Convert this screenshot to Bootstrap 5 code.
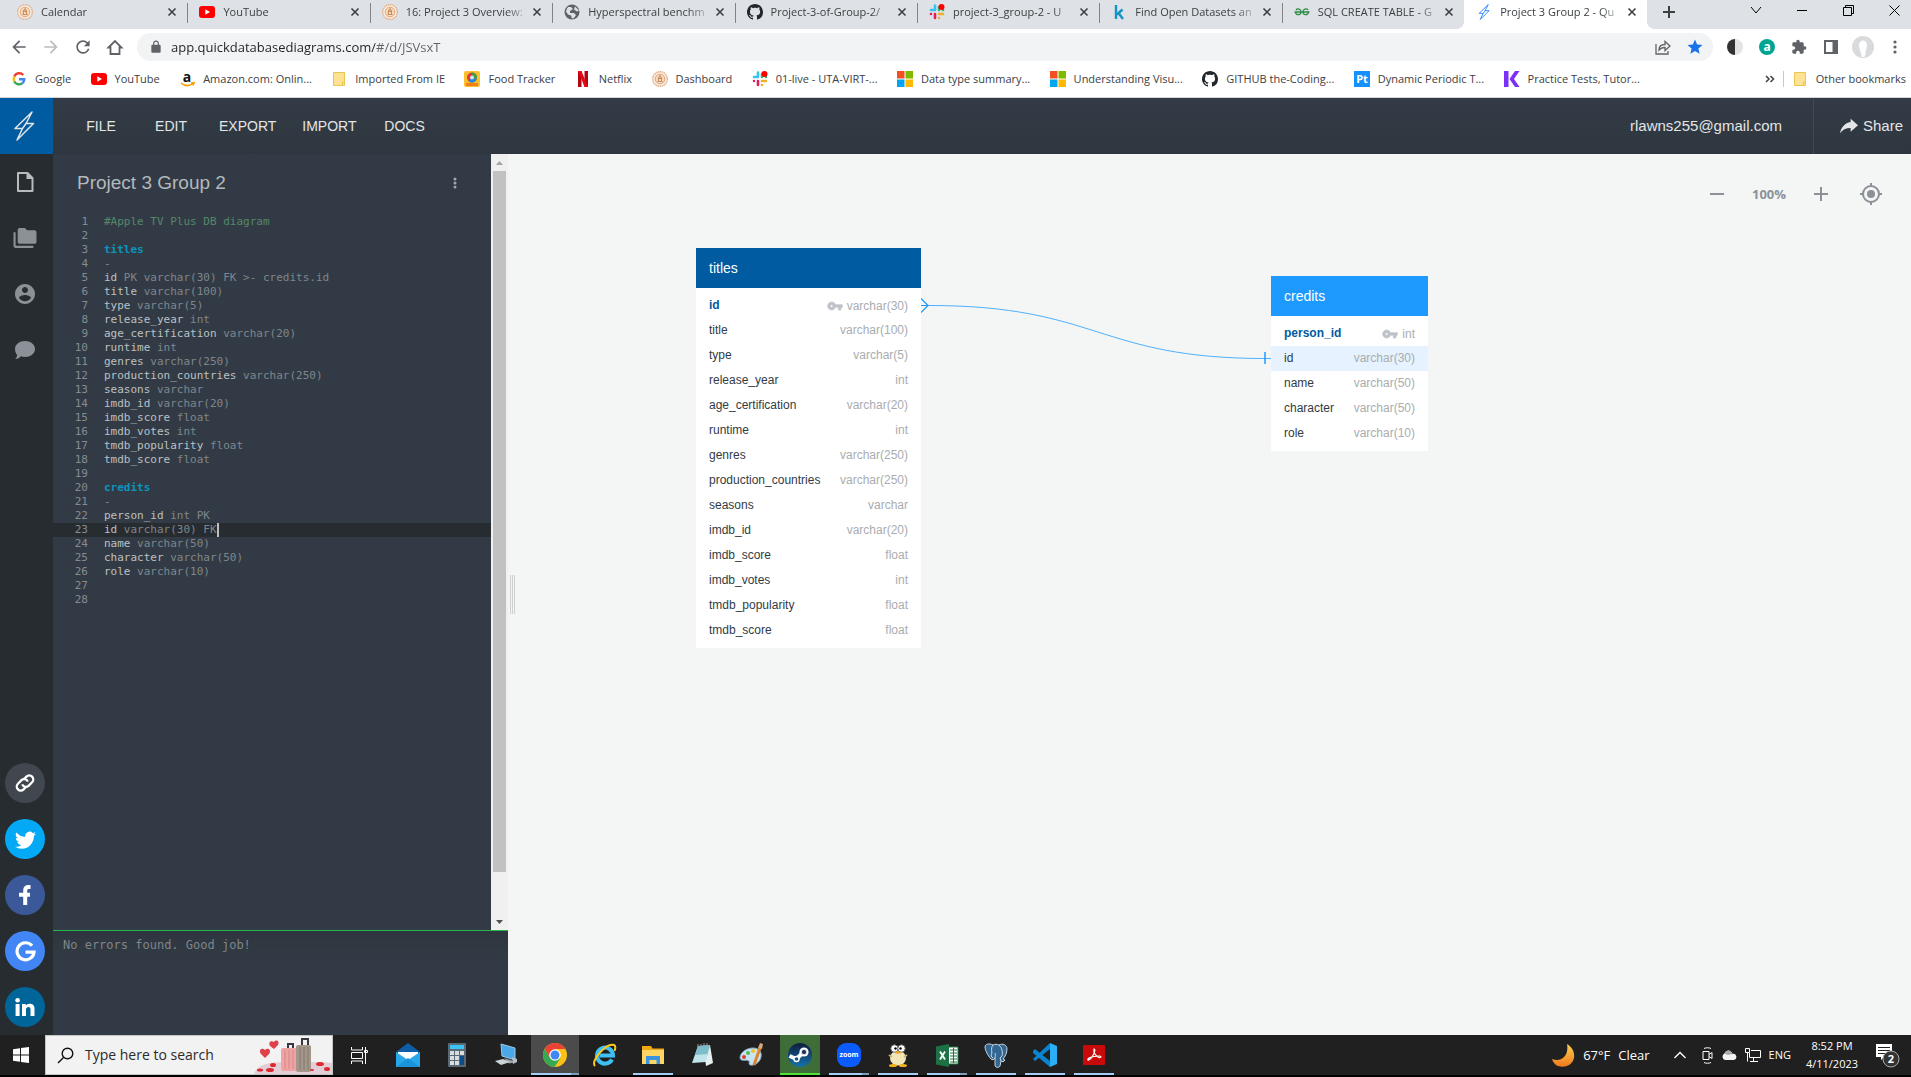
<!DOCTYPE html>
<html lang="en">
<head>
<meta charset="utf-8">
<meta name="viewport" content="width=device-width, initial-scale=1">
<title>Project 3 Group 2 - QuickDBD</title>
<link href="https://cdn.jsdelivr.net/npm/bootstrap@5.3.0/dist/css/bootstrap.min.css" rel="stylesheet">
<style>
  :root { --ui: "Open Sans", "Noto Sans", sans-serif; --app: "Liberation Sans", Arial, sans-serif; --code: "DejaVu Sans Mono", monospace; }
  body { font-family: var(--ui); font-size: 11px; line-height: 16px; color: #3c4043; overflow: hidden; }
  button { border: 0; background: none; padding: 0; color: inherit; display: flex; align-items: center; justify-content: center; }
  a { color: inherit; text-decoration: none; }
  svg { flex: none; display: block; }
  .tabstrip, .toolbar, .bookmarks, .apphead, .taskbar, .console { flex-shrink: 0; }

  /* browser tabs */
  .tabstrip { height: 29px; background: #dee1e6; padding-left: 5px; }
  .tab { flex: 0 1 9.57%; min-width: 0; height: 29px; padding: 0 10px 5px 12px; position: relative; }
  .tab + .tab::before { content: ""; position: absolute; left: 0; top: 3px; height: 20px; border-left: 1px solid #808387; }
  .tab.current { background: #fff; }
  .tab.current::before { display: none; }
  .tab.current::after, .stripend::before { content: ""; position: absolute; bottom: 0; width: 8px; height: 8px; }
  .tab.current::after { left: -8px; background: radial-gradient(circle at 0 0, #dee1e6 8px, #fff 8px); }
  .stripend { position: relative; flex: 1; padding-left: 12px; height: 29px; }
  .stripend::before { left: 0; background: radial-gradient(circle at 100% 0, #dee1e6 8px, #fff 8px); }
  .tabtitle { flex: 1; min-width: 0; white-space: nowrap; justify-content: flex-start; -webkit-mask-image: linear-gradient(90deg, #000 100px, transparent 124px); mask-image: linear-gradient(90deg, #000 100px, transparent 124px); }
  .plus { width: 20px; height: 24px; }
  .winbtn { width: 46px; height: 20px; color: #000; }
  .winbtn.quit { width: 34px; margin-left: 6px; }

  /* toolbar */
  .toolbar { height: 36px; padding: 0 0 0 3px; }
  .navbtn { width: 32px; height: 32px; color: #5f6368; }
  .omni { height: 28px; background: #f1f3f4; border-radius: 14px; margin: 0 6px; padding: 0 2px 0 12px; color: #5f6368; }
  .omni input { font-size: 13px; line-height: 20px; border: 0; outline: 0; background: linear-gradient(90deg, #202124 204px, #5f6368 204px); -webkit-background-clip: text; background-clip: text; -webkit-text-fill-color: transparent; color: #202124; padding: 0; min-width: 0; }
  .bookmarks { height: 33px; padding: 0 5px 4px 11px; border-bottom: 1px solid #d3d5d8; }
  .bmlist { flex: 0 1 1629px; }
  .vline { width: 1px; height: 16px; background: #c6c9cd; }

  /* app header */
  .apphead { height: 56px; background: linear-gradient(#333c46, #2e363f); color: #e3e5e7; font: 14px/20px var(--app); }
  .brand { width: 53px; background: #005ba1; padding-left: 13px; }
  .menu { margin-left: 13px; }
  .menu button { min-width: 70px; padding: 0 13px; }
  .account { font-size: 15px; }
  .share { border-left: 1px solid #414a54; padding: 0 8px 0 25px; margin-left: 31px; }

  /* left rail */
  .rail { width: 53px; background: #272c31; padding-bottom: 8px; }
  .rail .tool { width: 50px; height: 56px; color: #8c9197; }
  .rail .tool.on { color: #b8bbbe; }
  .social { width: 40px; height: 40px; border-radius: 50%; margin: 16px 0 0 5px; color: #fff; }
  .s-link { background: #40474e; }
  .s-tw { background: #03a9f4; }
  .s-fb { background: #3b5998; }
  .s-go { background: #4285f4; }
  .s-in { background: #006699; }

  /* editor */
  .side { width: 455px; background: #323b45; }
  .edhead { height: 61px; padding: 0 26px 3px 24px; }
  .edhead h1 { font: 19px/24px var(--app); color: #b4b8bc; margin: 0; }
  .code { font: 11px/14px var(--code); color: #7f868b; list-style: none; margin: 0; padding: 0; }
  .code li { height: 14px; display: flex; white-space: pre; }
  .code i { font-style: normal; width: 35px; text-align: right; margin-right: 16px; color: #858c92; }
  .code b { font-weight: 400; color: #bcc0c2; }
  .code .tb { font-weight: 700; color: #0d93bd; }
  .code .cm { color: #55876a; }
  .code .cur { background: #272c31; }
  .caret { border-right: 2px solid #bcc0c2; }
  .sbar { width: 17px; background: #f0f0f0; padding: 0 2px; }
  .sbar button { height: 17px; }
  .thumb { background: #c1c1c1; flex: 0 1 90.3%; }
  .console { height: 105px; border-top: 1px solid #25b84f; background: linear-gradient(#2e353e, #323b45 30px); font: 12px/16px var(--code); color: #7f868b; padding: 6px 10px; }

  /* diagram canvas */
  .board { background: #f4f6f5; font-family: var(--app); }
  .grip { position: absolute; left: 2px; top: 421px; width: 5px; height: 39px; border: 1px solid #cfcfcf; border-width: 0 1px; }
  .grip::after { content: ""; position: absolute; left: 1px; height: 39px; border-left: 1px solid #cfcfcf; }
  .zoomctl { position: absolute; right: 29px; top: 28px; color: #8b9197; font: 700 13px/24px var(--ui); }
  .entity { position: absolute; background: #fff; font-size: 12px; line-height: 15px; }
  .entity table { width: 100%; border-collapse: collapse; margin: 5px 0; }
  .entity h2 { font: 14px/40px var(--app); color: #fff; margin: 0; padding: 0 13px; }
  .entity td, .entity th { height: 25px; padding: 0; font-weight: 400; }
  .entity th { padding-left: 13px; color: #323b45; }
  .entity td { padding-right: 13px; color: #a9adb0; text-align: right; }
  .entity td svg { display: inline-block; vertical-align: -4px; margin-right: 4px; fill: #bfc3c9; stroke: #bfc3c9; }
  .entity .pk th { font-weight: 700; color: #005ba1; }
  .entity .hot { background: #e6f2ff; }
  .titles { left: 188px; top: 94px; width: 225px; }
  .titles h2 { background: #005ba1; }
  .credits { left: 763px; top: 122px; width: 157px; }
  .credits h2 { background: #1e9aff; }
  .links { position: absolute; left: 0; top: 0; }

  /* taskbar */
  .taskbar { height: 42px; background: #202020; border-bottom: 2px solid #000; color: #fff; }
  .start { width: 45px; padding-right: 3px; height: 40px; }
  .find { width: 288px; height: 40px; background: #f2f2f2; border: 1px solid #c4c4c4; padding-left: 11px; color: #222; margin-right: 2px; }
  .find input { font-size: 14px; line-height: 20px; border: 0; background: none; outline: 0; flex: 1; min-width: 0; padding: 0 0 0 11px; }
  .find input::placeholder { color: #2b2b2b; opacity: 1; }
  .tile { width: 40px; height: 40px; margin: 0 5px 0 4px; }
  .tile.run { border-bottom: 2px solid #a5cdf5; padding-top: 2px; }
  .tile.many { border-image: linear-gradient(90deg, #a5cdf5 80%, #7f9db8 80%) 2; }
  .tile.active { width: 48px; margin: 0 1px 0 0; background: #4b4b4b; }
  .tile.green { background: #3f6d38; border-color: #4fe237; }
  .weather { font-size: 13px; }
  .clock { font-size: 11px; line-height: 18px; text-align: center; width: 66px; }
  .notif { width: 46px; height: 40px; }
</style>
</head>
<body class="d-flex flex-column vh-100">

<svg width="0" height="0" class="position-absolute" aria-hidden="true">
  <symbol id="x" viewBox="0 0 10 10"><path d="M1.500 1.500l7 7M8.500 1.500l-7 7" stroke="#3c4043" stroke-width="1.600"/></symbol>
  <symbol id="seal" viewBox="0 0 16 16"><circle cx="8" cy="8" r="7.300" fill="#fbeee2" stroke="#e2b48e" stroke-width="1.400" stroke-dasharray="1.500 .5"/><circle cx="8" cy="8" r="4.800" fill="#f7dcc4" stroke="#dba67c"/><path d="M5.500 10.500h5M8 4.500L6 7.500h4zM6.500 7.500v3m3-3v3" stroke="#cb8a58" fill="#e9bd98"/></symbol>
  <symbol id="yt" viewBox="0 0 16 16"><rect y="2" width="16" height="12" rx="3" fill="#f00"/><path d="M6.300 5.300L11 8l-4.700 2.700z" fill="#fff"/></symbol>
  <symbol id="gh" viewBox="0 0 16 16"><path fill="#22272c" d="M8 0C3.580 0 0 3.580 0 8c0 3.540 2.290 6.530 5.470 7.590.4.070.55-.17.55-.38 0-.19-.01-.82-.01-1.490-2.010.37-2.530-.49-2.690-.94-.09-.23-.48-.94-.82-1.130-.28-.15-.68-.52-.01-.53.63-.01 1.080.58 1.230.82.72 1.210 1.870.87 2.330.66.07-.52.28-.87.51-1.070-1.780-.2-3.640-.89-3.640-3.950 0-.87.31-1.590.82-2.150-.08-.2-.36-1.020.08-2.120 0 0 .67-.21 2.200.82.64-.18 1.320-.27 2-.27.68 0 1.360.09 2 .27 1.530-1.040 2.200-.82 2.200-.82.44 1.100.16 1.920.08 2.120.51.56.82 1.270.82 2.150 0 3.070-1.870 3.750-3.650 3.950.29.25.54.73.54 1.480v2.200c0 .21.15.46.55.38A8.010 8.010 0 0 0 16 8c0-4.420-3.580-8-8-8z"/></symbol>
  <symbol id="slack" viewBox="0 0 16 16" stroke-width="2.600" stroke-linecap="round"><path d="M6 2v3.500M2 6h4M6 1.600h0" stroke="#36c5f0"/><path d="M10 3v3M14 6h0" stroke="#2eb67d"/><path d="M10 10h4M10 14h0" stroke="#ecb22e"/><path d="M6 10v4M2 10h0" stroke="#e01e5a"/><circle cx="12.500" cy="3" r="3" fill="#f00"/></symbol>
  <symbol id="bolt" viewBox="0 0 22 30"><path d="M19 1L2 17.500h7.500L4 29 20.500 12.500H13zM9.500 17.500L13 12.500" fill="none" stroke="currentColor" stroke-width="1.500" stroke-linejoin="round"/></symbol>
  <symbol id="folder" viewBox="0 0 16 16"><path d="M2.500 1.500h11v12h-2v1h-9z" fill="#fde293" stroke="#e9c64f"/><path d="M11.500 11v3.500h2V11z" fill="#fde293" stroke="#e9c64f"/></symbol>
  <symbol id="ms" viewBox="0 0 16 16"><path d="M0 0h7.500v7.500H0z" fill="#f25022"/><path d="M8.500 0H16v7.500H8.500z" fill="#7fba00"/><path d="M0 8.500h7.500V16H0z" fill="#00a4ef"/><path d="M8.500 8.500H16V16H8.500z" fill="#ffb900"/></symbol>
  <symbol id="key" viewBox="0 0 24 24"><path d="M12.650 10C11.830 7.670 9.610 6 7 6c-3.310 0-6 2.690-6 6s2.690 6 6 6c2.610 0 4.830-1.670 5.650-4H17v4h4v-4h2v-4H12.650zM7 14c-1.100 0-2-.9-2-2s.9-2 2-2 2 .9 2 2-.9 2-2 2z"/></symbol>
</svg>

<!-- Browser tabs -->
<div class="tabstrip d-flex" role="tablist">
  <div class="tab d-flex align-items-center gap-2"><svg width="16" height="16"><use href="#seal"/></svg><button class="tabtitle" role="tab">Calendar</button><button aria-label="Close"><svg width="10" height="10"><use href="#x"/></svg></button></div>
  <div class="tab d-flex align-items-center gap-2"><svg width="16" height="16"><use href="#yt"/></svg><button class="tabtitle" role="tab">YouTube</button><button aria-label="Close"><svg width="10" height="10"><use href="#x"/></svg></button></div>
  <div class="tab d-flex align-items-center gap-2"><svg width="16" height="16"><use href="#seal"/></svg><button class="tabtitle" role="tab">16: Project 3 Overview:</button><button aria-label="Close"><svg width="10" height="10"><use href="#x"/></svg></button></div>
  <div class="tab d-flex align-items-center gap-2"><svg width="16" height="16" viewBox="0 0 16 16"><circle cx="8" cy="8" r="7.500" fill="#5f6368"/><path d="M4 3l3 0 2 2-3 2v2h4l2 2-2 3-2 .5-1-3-3-1-2-3 1-3z" fill="#dee1e6"/><path d="M11 2.500l-1 3 3 2 2-1" fill="#dee1e6"/></svg><button class="tabtitle" role="tab">Hyperspectral benchm</button><button aria-label="Close"><svg width="10" height="10"><use href="#x"/></svg></button></div>
  <div class="tab d-flex align-items-center gap-2"><svg width="16" height="16"><use href="#gh"/></svg><button class="tabtitle" role="tab">Project-3-of-Group-2/</button><button aria-label="Close"><svg width="10" height="10"><use href="#x"/></svg></button></div>
  <div class="tab d-flex align-items-center gap-2"><svg width="16" height="16"><use href="#slack"/></svg><button class="tabtitle" role="tab">project-3_group-2 - U</button><button aria-label="Close"><svg width="10" height="10"><use href="#x"/></svg></button></div>
  <div class="tab d-flex align-items-center gap-2"><svg width="16" height="16" viewBox="0 0 16 16"><path d="M5 1v14M11.500 5.500L6 10.500m1.500-1.500l4.500 6" stroke="#1494c8" stroke-width="2.400" fill="none"/></svg><button class="tabtitle" role="tab">Find Open Datasets an</button><button aria-label="Close"><svg width="10" height="10"><use href="#x"/></svg></button></div>
  <div class="tab d-flex align-items-center gap-2"><svg width="16" height="16" viewBox="0 0 16 16" stroke="#2f8d46" stroke-width="1.300" fill="none"><path d="M2 6C3.500 4 7 5 7 8s-4.500 4-5.800 0H14.800C13.500 12 9 11 9 8s3.500-4 5-2"/></svg><button class="tabtitle" role="tab">SQL CREATE TABLE - G</button><button aria-label="Close"><svg width="10" height="10"><use href="#x"/></svg></button></div>
  <div class="tab current d-flex align-items-center gap-2"><svg width="16" height="16" class="text-primary"><use href="#bolt"/></svg><button class="tabtitle" role="tab" aria-selected="true">Project 3 Group 2 - Qu</button><button aria-label="Close"><svg width="10" height="10"><use href="#x"/></svg></button></div>
  <div class="stripend d-flex justify-content-between">
    <button class="plus" aria-label="New tab"><svg width="12" height="12" viewBox="0 0 12 12"><path d="M6 0v12M0 6h12" stroke="#3c4043" stroke-width="2"/></svg></button>
    <div class="d-flex">
      <button class="winbtn" aria-label="Search tabs"><svg width="12" height="12" viewBox="0 0 12 12"><path d="M1 3l5 6 5-6" fill="none" stroke="#000"/></svg></button>
      <button class="winbtn" aria-label="Minimize"><svg width="10" height="10" viewBox="0 0 10 10"><path d="M0 5.500h10" stroke="#000"/></svg></button>
      <button class="winbtn" aria-label="Restore"><svg width="11" height="11" viewBox="0 0 11 11"><path d="M.5 2.500h8v8h-8zM2.500 2.500v-2h8v8h-2" fill="none" stroke="#000"/></svg></button>
      <button class="winbtn quit" aria-label="Close window"><svg width="11" height="11" viewBox="0 0 11 11"><path d="M.5.5l10 10M10.500.5l-10 10" stroke="#000"/></svg></button>
    </div>
  </div>
</div>

<!-- Address bar -->
<div class="toolbar d-flex align-items-center bg-white">
  <button class="navbtn" aria-label="Back"><svg width="20" height="20" viewBox="0 0 24 24" fill="currentColor"><path d="M20 11H7.830l5.590-5.590L12 4l-8 8 8 8 1.410-1.410L7.830 13H20z"/></svg></button>
  <button class="navbtn" aria-label="Forward"><svg width="20" height="20" viewBox="0 0 24 24" fill="#babcbe"><path d="M4 11h12.170l-5.590-5.590L12 4l8 8-8 8-1.410-1.410L16.170 13H4z"/></svg></button>
  <button class="navbtn" aria-label="Reload"><svg width="20" height="20" viewBox="0 0 24 24" fill="currentColor"><path d="M17.650 6.350A7.960 7.960 0 0 0 12 4c-4.420 0-7.990 3.580-7.990 8s3.570 8 7.990 8c3.730 0 6.840-2.550 7.730-6h-2.080A5.990 5.990 0 0 1 12 18c-3.310 0-6-2.690-6-6s2.690-6 6-6c1.660 0 3.140.69 4.220 1.780L13 11h7V4z"/></svg></button>
  <button class="navbtn" aria-label="Home"><svg width="18" height="18" viewBox="0 0 18 18"><path d="M2.500 9.500L9 3l6.500 6.500h-2V16h-9V9.500z" fill="none" stroke="currentColor" stroke-width="1.800"/></svg></button>
  <div class="omni d-flex align-items-center flex-fill">
    <svg width="14" height="14" viewBox="0 0 24 24" fill="currentColor"><path d="M18 8h-1V6c0-2.760-2.240-5-5-5S7 3.240 7 6v2H6c-1.100 0-2 .9-2 2v10c0 1.100.9 2 2 2h12c1.100 0 2-.9 2-2V10c0-1.100-.9-2-2-2zM9 6a3 3 0 0 1 6 0v2H9z"/></svg>
    <input type="text" class="flex-fill ms-2" aria-label="Address" value="app.quickdatabasediagrams.com/#/d/JSVsxT">
    <button class="navbtn" aria-label="Share page"><svg width="16" height="16" viewBox="0 0 16 16" fill="none" stroke="currentColor" stroke-width="1.300"><path d="M1 5v10h12v-3M4 11c0-4 2.500-5.500 6-5.500V2.500l5 4.500-5 4.500V8.500C7.500 8.500 5.500 9 4 11z"/></svg></button>
    <button class="navbtn" aria-label="Bookmark"><svg width="18" height="18" viewBox="0 0 24 24" fill="#1a73e8"><path d="M12 17.270L18.180 21l-1.640-7.030L22 9.240l-7.190-.61L12 2 9.190 8.630 2 9.240l5.460 4.730L5.820 21z"/></svg></button>
  </div>
  <button class="navbtn" aria-label="Dark mode"><svg width="16" height="16" viewBox="0 0 16 16"><path d="M8 0a8 8 0 0 0 0 16z" fill="#333"/><path d="M8 0a8 8 0 0 1 0 16z" fill="#e4e4e4"/></svg></button>
  <button class="navbtn" aria-label="Extension a"><svg width="16" height="16" viewBox="0 0 16 16"><circle cx="8" cy="8" r="8" fill="#00a591"/><text x="8" y="12" font-size="12" font-weight="700" fill="#fff" text-anchor="middle">a</text></svg></button>
  <button class="navbtn" aria-label="Extensions"><svg width="16" height="16" viewBox="0 0 24 24" fill="currentColor"><path d="M20.500 11H19V7c0-1.100-.9-2-2-2h-4V3.500C13 2.120 11.880 1 10.500 1S8 2.120 8 3.500V5H4c-1.100 0-1.990.9-1.990 2v3.800H3.500c1.490 0 2.700 1.210 2.700 2.700s-1.210 2.700-2.700 2.700H2V20c0 1.100.9 2 2 2h3.800v-1.500c0-1.490 1.210-2.700 2.700-2.700 1.490 0 2.700 1.210 2.700 2.700V22H17c1.100 0 2-.9 2-2v-4h1.500c1.380 0 2.500-1.120 2.500-2.500S21.880 11 20.500 11z"/></svg></button>
  <button class="navbtn" aria-label="Side panel"><svg width="14" height="14" viewBox="0 0 14 14"><path d="M1 1h12v12H1z" fill="none" stroke="currentColor" stroke-width="2"/><path d="M8.500 1H13v12H8.500z" fill="currentColor"/></svg></button>
  <button class="navbtn" aria-label="Profile"><svg width="22" height="22" viewBox="0 0 22 22"><circle cx="11" cy="11" r="11" fill="#d9dadb"/><path d="M7 9c0-6 8-6 8 0 0 4-2 6-1.500 9.500L12 21H9.500C10 17 7 14 7 9z" fill="#fff"/></svg></button>
  <button class="navbtn" aria-label="Menu"><svg width="4" height="14" viewBox="0 0 4 14" fill="currentColor"><circle cx="2" cy="2" r="1.600"/><circle cx="2" cy="7" r="1.600"/><circle cx="2" cy="12" r="1.600"/></svg></button>
</div>

<!-- Bookmarks -->
<nav class="bookmarks d-flex align-items-center bg-white text-nowrap" aria-label="Bookmarks">
  <div class="bmlist d-flex justify-content-between">
    <a href="#" class="d-flex gap-2"><svg width="16" height="16" viewBox="0 0 16 16" fill="none" stroke-width="2.400"><path d="M12.300 4A5.400 5.400 0 0 0 3.300 5.500" stroke="#ea4335"/><path d="M3.300 5.500a5.400 5.400 0 0 0 0 5" stroke="#fbbc05"/><path d="M3.300 10.500a5.400 5.400 0 0 0 8 1.800" stroke="#34a853"/><path d="M11.300 12.300A5.200 5.200 0 0 0 13.300 8.300H8" stroke="#4285f4"/></svg>Google</a>
    <a href="#" class="d-flex gap-2"><svg width="16" height="16"><use href="#yt"/></svg>YouTube</a>
    <a href="#" class="d-flex gap-2"><svg width="16" height="16" viewBox="0 0 16 16"><text x="8" y="11" font-size="14" font-weight="700" fill="#111" text-anchor="middle">a</text><path d="M2 12c4 3.500 8.500 3 12 .5M12 12l3-.3-1 2.800" stroke="#f90" stroke-width="1.500" fill="none"/></svg>Amazon.com: Onlin...</a>
    <a href="#" class="d-flex gap-2"><svg width="16" height="16"><use href="#folder"/></svg>Imported From IE</a>
    <a href="#" class="d-flex gap-2"><svg width="16" height="16" viewBox="0 0 16 16"><rect width="16" height="16" rx="2" fill="#fbc02d"/><rect x="2" y="12" width="12" height="3" fill="#f57f17"/><circle cx="8" cy="6.500" r="5" fill="#e53935"/><path d="M8 6.500V1.500a5 5 0 0 1 4.500 7.200z" fill="#43a047"/><path d="M8 6.500l4.500 2.300a5 5 0 0 1-8 1.200z" fill="#1e88e5"/><circle cx="8" cy="6.500" r="2" fill="#cfe2ff"/></svg>Food Tracker</a>
    <a href="#" class="d-flex gap-2"><svg width="16" height="16" viewBox="0 0 16 16"><path d="M3 0h3.500v16H3zM9.500 0H13v16H9.500z" fill="#b1060f"/><path d="M3 0h3.500L13 16H9.500z" fill="#e50914"/></svg>Netflix</a>
    <a href="#" class="d-flex gap-2"><svg width="16" height="16"><use href="#seal"/></svg>Dashboard</a>
    <a href="#" class="d-flex gap-2"><svg width="16" height="16"><use href="#slack"/></svg>01-live - UTA-VIRT-...</a>
    <a href="#" class="d-flex gap-2"><svg width="16" height="16"><use href="#ms"/></svg>Data type summary...</a>
    <a href="#" class="d-flex gap-2"><svg width="16" height="16"><use href="#ms"/></svg>Understanding Visu...</a>
    <a href="#" class="d-flex gap-2"><svg width="16" height="16"><use href="#gh"/></svg>GITHUB the-Coding...</a>
    <a href="#" class="d-flex gap-2"><svg width="16" height="16" viewBox="0 0 16 16"><rect width="16" height="16" fill="#1590ff"/><text x="8" y="12" font-size="11" font-weight="700" fill="#fff" text-anchor="middle">Pt</text></svg>Dynamic Periodic T...</a>
    <a href="#" class="d-flex gap-2"><svg width="16" height="16" viewBox="0 0 16 16" fill="#7b2ff7"><path d="M0 0h4.500v16H0zM11 0h4.500L10 8l5.500 8H11L5.500 8z"/></svg>Practice Tests, Tutor...</a>
  </div>
  <div class="d-flex align-items-center ms-auto">
    <button aria-label="More bookmarks" class="me-2"><svg width="10" height="8" viewBox="0 0 10 8"><path d="M1 1l3 3-3 3M5.500 1l3 3-3 3" fill="none" stroke="#3c4043" stroke-width="1.500"/></svg></button>
    <span class="vline me-2"></span>
    <a href="#" class="d-flex gap-2"><svg width="16" height="16"><use href="#folder"/></svg>Other bookmarks</a>
  </div>
</nav>

<!-- App header -->
<header class="apphead d-flex">
  <a href="#" class="brand d-flex align-items-center" aria-label="QuickDBD"><svg width="22" height="30"><use href="#bolt"/></svg></a>
  <nav class="menu d-flex"><button>FILE</button><button>EDIT</button><button>EXPORT</button><button>IMPORT</button><button>DOCS</button></nav>
  <button class="account ms-auto">rlawns255@gmail.com</button>
  <button class="share account"><svg width="20" height="18" class="me-1" viewBox="0 0 24 22" fill="currentColor"><path d="M14 6V2l9 8-9 8v-4.500C8 13.500 4 15.500 1 20 2 13 7 7 14 6z"/></svg>Share</button>
</header>

<main class="d-flex flex-fill overflow-hidden">
  <!-- Left rail -->
  <aside class="rail d-flex flex-column">
    <button class="tool on" aria-label="Diagram"><svg width="24" height="24" viewBox="0 0 24 24"><path d="M5 3h9.500L19.500 8v13H5z" fill="none" stroke="currentColor" stroke-width="2" stroke-linejoin="round"/><path d="M13.500 2.500v6.500h6.500z" fill="currentColor"/></svg></button>
    <button class="tool" aria-label="My diagrams"><svg width="26" height="24" viewBox="0 0 24 23" fill="currentColor"><path d="M3 6H1v13c0 1.100.9 2 2 2h17v-2H3z"/><path d="M21 4h-7l-2-2H7c-1.100 0-2 .9-2 2v11c0 1.100.9 2 2 2h14c1.100 0 2-.9 2-2V6c0-1.100-.9-2-2-2z"/></svg></button>
    <button class="tool" aria-label="Account"><svg width="24" height="24" viewBox="0 0 24 24" fill="currentColor"><path d="M12 2C6.480 2 2 6.480 2 12s4.480 10 10 10 10-4.480 10-10S17.520 2 12 2zm0 3c1.660 0 3 1.340 3 3s-1.340 3-3 3-3-1.340-3-3 1.340-3 3-3zm0 14.200c-2.500 0-4.710-1.280-6-3.220.03-1.990 4-3.080 6-3.080 1.990 0 5.970 1.090 6 3.080-1.290 1.940-3.500 3.220-6 3.220z"/></svg></button>
    <button class="tool" aria-label="Feedback"><svg width="22" height="20" viewBox="0 0 22 20" fill="currentColor"><path d="M11 1c5.500 0 10 3.500 10 8s-4.500 8-10 8c-1.500 0-3-.3-4.200-.8C5.500 18 3.500 19 1.200 19c1-1 1.800-2.500 2-4C1.800 13.500 1 11.300 1 9c0-4.500 4.500-8 10-8z"/></svg></button>
    <a href="#" class="social s-link d-flex align-items-center justify-content-center mt-auto" aria-label="Copy link"><svg width="22" height="22" viewBox="0 0 22 22" fill="none" stroke="currentColor" stroke-width="2.300"><g transform="rotate(-45 11 11)"><path d="M9.500 14.500H5.500a4 4 0 0 1 0-8h5a4 4 0 0 1 3.500 5.500"/><path d="M12.500 7.500h4a4 4 0 0 1 0 8h-5a4 4 0 0 1-3.500-5.500"/></g></svg></a>
    <a href="#" class="social s-tw d-flex align-items-center justify-content-center" aria-label="Twitter"><svg width="21" height="21" viewBox="0 0 16 16" fill="currentColor"><path d="M5.026 15c6.038 0 9.341-5.003 9.341-9.334 0-.14 0-.282-.006-.422A6.685 6.685 0 0 0 16 3.542a6.658 6.658 0 0 1-1.889.518 3.301 3.301 0 0 0 1.447-1.817 6.533 6.533 0 0 1-2.087.793A3.286 3.286 0 0 0 7.875 6.030a9.325 9.325 0 0 1-6.767-3.429 3.289 3.289 0 0 0 1.018 4.382A3.323 3.323 0 0 1 .64 6.575v.045a3.288 3.288 0 0 0 2.632 3.218 3.203 3.203 0 0 1-.865.115 3.230 3.230 0 0 1-.614-.057 3.283 3.283 0 0 0 3.067 2.277A6.588 6.588 0 0 1 .78 13.580a6.320 6.320 0 0 1-.78-.045A9.344 9.344 0 0 0 5.026 15z"/></svg></a>
    <a href="#" class="social s-fb d-flex align-items-center justify-content-center" aria-label="Facebook"><svg width="12" height="20" viewBox="0 0 12 20"><path d="M11.500 2H9.500C7 2 6.200 3.500 6.200 5.500V20M0 9.800h11" fill="none" stroke="#fff" stroke-width="4"/></svg></a>
    <a href="#" class="social s-go d-flex align-items-center justify-content-center" aria-label="Google"><svg width="21" height="21" viewBox="0 0 21 21"><path d="M17 4.700A8.500 8.500 0 1 0 19 11.200H10.500" fill="none" stroke="#fff" stroke-width="3.200"/></svg></a>
    <a href="#" class="social s-in d-flex align-items-center justify-content-center" aria-label="LinkedIn"><svg width="20" height="18" viewBox="0 0 20 18" fill="#fff"><circle cx="2.600" cy="2.300" r="2.300"/><path d="M.6 6h4v12h-4zM7 6h3.800v1.700C12 5 19.500 4.500 19.500 10.500V18h-4v-6.500c0-3.500-4.500-3-4.500 0V18H7z"/></svg></a>
  </aside>

  <!-- Editor -->
  <section class="side d-flex flex-column">
    <div class="d-flex flex-fill overflow-hidden">
      <div class="flex-fill">
        <div class="edhead d-flex align-items-center justify-content-between">
          <h1>Project 3 Group 2</h1>
          <button aria-label="Diagram menu" class="me-2"><svg width="4" height="12" viewBox="0 0 4 12" fill="#a0a5aa"><circle cx="2" cy="2" r="1.500"/><circle cx="2" cy="6" r="1.500"/><circle cx="2" cy="10" r="1.500"/></svg></button>
        </div>
        <ul class="code">
          <li><i>1</i><span class="cm">#Apple TV Plus DB diagram</span></li>
          <li><i>2</i></li>
          <li><i>3</i><span class="tb">titles</span></li>
          <li><i>4</i>-</li>
          <li><i>5</i><b>id</b> PK varchar(30) FK &gt;- credits.id</li>
          <li><i>6</i><b>title</b> varchar(100)</li>
          <li><i>7</i><b>type</b> varchar(5)</li>
          <li><i>8</i><b>release_year</b> int</li>
          <li><i>9</i><b>age_certification</b> varchar(20)</li>
          <li><i>10</i><b>runtime</b> int</li>
          <li><i>11</i><b>genres</b> varchar(250)</li>
          <li><i>12</i><b>production_countries</b> varchar(250)</li>
          <li><i>13</i><b>seasons</b> varchar</li>
          <li><i>14</i><b>imdb_id</b> varchar(20)</li>
          <li><i>15</i><b>imdb_score</b> float</li>
          <li><i>16</i><b>imdb_votes</b> int</li>
          <li><i>17</i><b>tmdb_popularity</b> float</li>
          <li><i>18</i><b>tmdb_score</b> float</li>
          <li><i>19</i></li>
          <li><i>20</i><span class="tb">credits</span></li>
          <li><i>21</i>-</li>
          <li><i>22</i><b>person_id</b> int PK</li>
          <li class="cur"><i>23</i><b>id</b> varchar(30) FK<span class="caret"></span></li>
          <li><i>24</i><b>name</b> varchar(50)</li>
          <li><i>25</i><b>character</b> varchar(50)</li>
          <li><i>26</i><b>role</b> varchar(10)</li>
          <li><i>27</i></li>
          <li><i>28</i></li>
        </ul>
      </div>
      <div class="sbar d-flex flex-column">
        <button aria-label="Scroll up"><svg width="7" height="4" viewBox="0 0 7 4"><path d="M0 4L3.500 0 7 4z" fill="#a3a3a3"/></svg></button>
        <div class="thumb"></div>
        <button class="mt-auto" aria-label="Scroll down"><svg width="7" height="4" viewBox="0 0 7 4"><path d="M0 0l3.500 4L7 0z" fill="#505050"/></svg></button>
      </div>
    </div>
    <div class="console">No errors found. Good job!</div>
  </section>

  <!-- Diagram canvas -->
  <section class="board flex-fill position-relative">
    <div class="grip"></div>
    <div class="zoomctl d-flex align-items-center">
      <button aria-label="Zoom out"><svg width="14" height="14" viewBox="0 0 14 14"><path d="M0 7h14" stroke="currentColor" stroke-width="2"/></svg></button>
      <span class="mx-4 px-1">100%</span>
      <button aria-label="Zoom in" class="me-4"><svg width="14" height="14" viewBox="0 0 14 14"><path d="M0 7h14M7 0v14" stroke="currentColor" stroke-width="2"/></svg></button>
      <button aria-label="Center diagram" class="ms-2"><svg width="22" height="22" viewBox="0 0 22 22"><circle cx="11" cy="11" r="8" fill="none" stroke="currentColor" stroke-width="2"/><circle cx="11" cy="11" r="4" fill="currentColor"/><path d="M11 0v4M11 18v4M0 11h4M18 11h4" stroke="currentColor" stroke-width="2"/></svg></button>
    </div>
    <svg class="links" width="780" height="300" viewBox="0 0 780 300" fill="none" stroke="#1e9aff">
      <path d="M421 151.500C590 151.500 590 204.500 757 204.500H763" stroke="#4fb0ff"/>
      <path d="M413 144.500l7 7-7 7M413 151.500h8" stroke-width="1.200"/>
      <path d="M757 198v12" stroke-width="1.500"/>
    </svg>
    <article class="entity titles">
      <h2>titles</h2>
      <table>
        <tr class="pk"><th>id</th><td><svg width="16" height="16"><use href="#key"/></svg>varchar(30)</td></tr>
        <tr><th>title</th><td>varchar(100)</td></tr>
        <tr><th>type</th><td>varchar(5)</td></tr>
        <tr><th>release_year</th><td>int</td></tr>
        <tr><th>age_certification</th><td>varchar(20)</td></tr>
        <tr><th>runtime</th><td>int</td></tr>
        <tr><th>genres</th><td>varchar(250)</td></tr>
        <tr><th>production_countries</th><td>varchar(250)</td></tr>
        <tr><th>seasons</th><td>varchar</td></tr>
        <tr><th>imdb_id</th><td>varchar(20)</td></tr>
        <tr><th>imdb_score</th><td>float</td></tr>
        <tr><th>imdb_votes</th><td>int</td></tr>
        <tr><th>tmdb_popularity</th><td>float</td></tr>
        <tr><th>tmdb_score</th><td>float</td></tr>
      </table>
    </article>
    <article class="entity credits">
      <h2>credits</h2>
      <table>
        <tr class="pk"><th>person_id</th><td><svg width="16" height="16"><use href="#key"/></svg>int</td></tr>
        <tr class="hot"><th>id</th><td>varchar(30)</td></tr>
        <tr><th>name</th><td>varchar(50)</td></tr>
        <tr><th>character</th><td>varchar(50)</td></tr>
        <tr><th>role</th><td>varchar(10)</td></tr>
      </table>
    </article>
  </section>
</main>

<!-- Taskbar -->
<footer class="taskbar d-flex">
  <button class="start" aria-label="Start"><svg width="16" height="16" viewBox="0 0 16 16" fill="#fff"><path d="M0 2.200l7-1v6.300H0zM8 1.100L16 0v7.500H8zM0 8.500h7v6.300l-7-1zM8 8.500h8V16l-8-1.100z"/></svg></button>
  <label class="find d-flex align-items-center">
    <svg width="17" height="17" viewBox="0 0 17 17" fill="none" stroke="#111" stroke-width="1.400"><circle cx="10.500" cy="6.500" r="5.300"/><path d="M6.500 10.500L1 16"/></svg>
    <input type="text" placeholder="Type here to search" aria-label="Type here to search">
    <svg width="78" height="38" viewBox="0 0 78 38"><path d="M0 38C4 26 20 26 40 26s30 0 38 1v11z" fill="#e3cdd6"/><path d="M11 22L7 18c-3-4 1-7 4-4 3-3 7 0 4 4zM20 13l-4-3c-2-4 1-6 4-4 2-3 6-1 4 3z" fill="#e0404a"/><path d="M34 13V8h5v5M48 9V3h6v6" stroke="#3b3640" stroke-width="2" fill="none"/><rect x="27" y="12" width="16" height="23" rx="2" fill="#f0a3a3"/><path d="M31 14v19M35 14v19M39 14v19" stroke="#d48787"/><rect x="42" y="9" width="15" height="27" rx="2" fill="#a2978a"/><path d="M46 11v23M50 11v23M54 11v23" stroke="#83796d"/><g fill="#dc2b30"><ellipse cx="19" cy="29" rx="3" ry="2"/><ellipse cx="6" cy="34" rx="3" ry="1.500"/><ellipse cx="16" cy="34" rx="4" ry="2"/><ellipse cx="66" cy="28" rx="4" ry="2"/><ellipse cx="73" cy="33" rx="3" ry="2"/><ellipse cx="58" cy="34" rx="2" ry="1"/></g></svg>
  </label>
  <button class="tile" aria-label="Task view"><svg width="17" height="17" viewBox="0 0 17 17" fill="none" stroke="#fff"><path d="M.5 0v3h11V0M.5 17v-3h11v3M.5 5.500h11v6H.5zM14.500 0v17M13.500 3.500h3v2h-3z"/></svg></button>
  <button class="tile" aria-label="Mail"><svg width="24" height="24" viewBox="0 0 24 24"><path d="M0 9L12 0l12 9v14H0z" fill="#0f5fa8"/><path d="M2 9h20v6l-10 5L2 15z" fill="#fff"/><path d="M0 9l12 8L24 9v15H0z" fill="#28a8ea"/><path d="M0 24L12 15l12 9z" fill="#1b93dc"/></svg></button>
  <button class="tile" aria-label="Calculator"><svg width="18" height="24" viewBox="0 0 18 24"><rect width="18" height="24" rx="1" fill="#5a6a75"/><path d="M2 2h14v4H2z" fill="#3bc3f3"/><g fill="#d8dde0"><path d="M2 8h4v4H2zM7 8h4v4H7zM12 8h4v4h-4zM2 13h4v4H2zM7 13h4v4H7zM2 18h4v4H2zM7 18h4v4H7z"/></g><path d="M12 13h4v9h-4z" fill="#0c4c8a"/></svg></button>
  <button class="tile" aria-label="Remote desktop"><svg width="24" height="24" viewBox="0 0 24 24"><path d="M7 1l14 4v12L8 13z" fill="#4aa8e8" stroke="#9fc8e4"/><path d="M10 15l8 2.500 2 2-5 1z" fill="#9aa4ab"/><path d="M1 18l8-2 7 3-9 3z" fill="#cdd4d9"/><path d="M18 14l5 2v3l-4 2z" fill="#b5bec5"/></svg></button>
  <button class="tile run many active" aria-label="Chrome"><svg width="24" height="24" viewBox="0 0 24 24"><circle cx="12" cy="12" r="12" fill="#fbc116"/><path d="M1.600 6A12 12 0 0 1 22.400 6H12L7 15z" fill="#ea4335"/><path d="M1.600 6A12 12 0 0 0 11.500 24l6-9H7z" fill="#34a853"/><circle cx="12" cy="12" r="5.800" fill="#fff"/><circle cx="12" cy="12" r="4.500" fill="#4285f4"/></svg></button>
  <button class="tile" aria-label="Internet Explorer"><svg width="25" height="25" viewBox="0 0 25 25" fill="none"><path d="M20 16.500A8 8 0 1 1 21 12.500H7.500" stroke="#3fc0f5" stroke-width="4"/><path d="M3 23C-2 18 14 0 22 2c2 1 1.500 3.500.5 6" stroke="#fcc81e" stroke-width="2"/></svg></button>
  <button class="tile run" aria-label="File Explorer"><svg width="22" height="19" viewBox="0 0 22 19"><path d="M0 0h9l1.500 2.500H22V18H0z" fill="#f0a90e"/><path d="M0 4h22v14H0z" fill="#ffd664"/><path d="M4 18v-8h14v8h-3.500v-4h-7v4z" fill="#3a95dc"/></svg></button>
  <button class="tile" aria-label="Notepad"><svg width="24" height="24" viewBox="0 0 24 24"><path d="M8 3l12-1-4 17L2 20z" fill="#bfe4ea"/><path d="M8 3l12-1-2 9-13 1z" fill="#7dbcca"/><path d="M20 2l3 18-7 3-.5-4z" fill="#e6eff0"/><path d="M8 1v3M11 1v3M14 0v3M17 0v3" stroke="#999"/></svg></button>
  <button class="tile" aria-label="Paint"><svg width="25" height="24" viewBox="0 0 25 24"><path d="M1 15C1 9 8 5 14 5s9 4 8 9-6 9-11 8c-2-1 0-3-1-4-3-2-8 1-9-3z" fill="#c7e4f5" stroke="#80acc8"/><circle cx="5" cy="14" r="2" fill="#e23c30"/><circle cx="9" cy="10" r="2" fill="#57b947"/><circle cx="14" cy="8" r="2" fill="#f4c22c"/><path d="M15 22l6-17" stroke="#e0812b" stroke-width="3"/><path d="M19 5l2-5 3 1-1 5z" fill="#d5a97b"/></svg></button>
  <button class="tile run green" aria-label="Steam"><svg width="24" height="24" viewBox="0 0 24 24"><defs><linearGradient id="st" x2="0" y2="1"><stop stop-color="#101b3c"/><stop offset="1" stop-color="#1473ab"/></linearGradient></defs><circle cx="12" cy="12" r="12" fill="url(#st)"/><path d="M1.500 13l7 3 6-6" stroke="#fff" stroke-width="4" fill="none"/><circle cx="16" cy="9" r="4.600" fill="#fff"/><circle cx="16" cy="9" r="2.600" fill="#14315b" stroke="#ddd"/><circle cx="8.500" cy="16" r="3.200" fill="#fff"/><circle cx="8.500" cy="16" r="1.800" fill="#15518a"/></svg></button>
  <button class="tile run many" aria-label="Zoom"><svg width="24" height="24" viewBox="0 0 24 24"><rect width="24" height="24" rx="9" fill="#0b5cff"/><text x="12" y="14" font-size="7" font-weight="700" fill="#fff" text-anchor="middle">zoom</text></svg></button>
  <button class="tile run" aria-label="Penguin"><svg width="20" height="23" viewBox="0 0 20 23"><ellipse cx="10" cy="5" rx="8" ry="5" fill="#111"/><ellipse cx="10" cy="14" rx="8" ry="7.500" fill="#f2e5b8"/><path d="M1 11l3 2M19 11l-3 2" stroke="#c9b573" stroke-width="2"/><circle cx="6.500" cy="4.500" r="3.700" fill="#fff" stroke="#666"/><circle cx="13.500" cy="4.500" r="3.700" fill="#fff" stroke="#666"/><circle cx="7.500" cy="4.500" r="1.200"/><circle cx="12.500" cy="4.500" r="1.200"/><ellipse cx="10" cy="8.500" rx="3" ry="1.300" fill="#f2a51f"/><ellipse cx="5" cy="21.500" rx="4" ry="1.500" fill="#f5b21e"/><ellipse cx="15" cy="21.500" rx="4" ry="1.500" fill="#f5b21e"/></svg></button>
  <button class="tile run many" aria-label="Excel"><svg width="23" height="23" viewBox="0 0 23 23"><path d="M12 3h10v17H12z" fill="#fff" stroke="#207245"/><path d="M14 6h7M14 9h7M14 12h7M14 15h7M14 18h7M17.500 4v15" stroke="#207245"/><path d="M0 2.500L13 0v23L0 20.500z" fill="#1e7145"/><path d="M4 7.500l5 8M9 7.500l-5 8" stroke="#fff" stroke-width="1.800"/></svg></button>
  <button class="tile run" aria-label="pgAdmin"><svg width="24" height="25" viewBox="0 0 24 25" fill="#336791" stroke="#d8e4ee" stroke-width=".9"><path d="M15 2c4-2 8 0 8 4s-2 8-4 10l2 1c-1 2-3 2-4 1l-1 5c-1 2-5 2-5-1v-7c-1 2-3 2-4 1-3-3-6-9-6-12s4-4 8-2c2-1 4-1 6 0z"/><path d="M9 2C6 6 9 9 7 13l2 2M15 2c3 3 4 7 3 11l-2 2M11 15c0-2 1-3 0-5M16 15l1 3" fill="none"/></svg></button>
  <button class="tile run" aria-label="Visual Studio Code"><svg width="24" height="24" viewBox="0 0 24 24"><path d="M17 0l7 3v18l-7 3z" fill="#2bb0f5"/><path d="M0 8l2-2 15 12v6L0 10zM17 0v6L2 18l-2-2z" fill="#0b84d0"/></svg></button>
  <button class="tile run" aria-label="Acrobat Reader"><svg width="22" height="21" viewBox="0 0 22 21"><rect width="22" height="20" rx="1" fill="#c80a0a"/><path d="M11 4c2 0 0 5-2 8s-5 4-4 2 8-3 11-3 2 2 0 1.500S10 8 11 4z" fill="none" stroke="#fff" stroke-width="1.200"/></svg></button>

  <div class="d-flex align-items-center ms-auto">
    <button class="weather gap-2"><svg width="23" height="23" viewBox="0 0 23 23"><defs><linearGradient id="mn" x2="0" y2="1"><stop stop-color="#fcd14a"/><stop offset="1" stop-color="#f0791f"/></linearGradient></defs><path d="M15 0c5 3 8 8 7 14-2 8-10 10-16 8-3-1-5-4-6-7 5 2 9 1 12-2s4-8 3-13z" fill="url(#mn)"/></svg>67°F <span>Clear</span></button>
    <button class="ms-4" aria-label="Hidden icons"><svg width="12" height="8" viewBox="0 0 12 8"><path d="M.5 7L6 1.500 11.500 7" fill="none" stroke="#fff" stroke-width="1.300"/></svg></button>
    <svg class="mx-2 ms-3" width="11" height="17" viewBox="0 0 11 17" fill="none" stroke="#fff"><path d="M1 4.500h6v8H1zM7 7.500l3-2v6l-3-2M2 1.500c2-1 5-1 7 0M2 15.500c2 1 5 1 7 0"/></svg>
    <svg width="16" height="11" viewBox="0 0 16 11"><path d="M4 10a3.500 3.500 0 0 1-.5-6.500C5-.5 10-1 11.500 4a3 3 0 0 1 1.500 6z" fill="#f4f4f4"/><path d="M3.500 3.500C5-.5 10-1 11.500 4L7 5z" fill="#aaa"/></svg>
    <svg class="mx-2" width="16" height="14" viewBox="0 0 16 14" fill="none" stroke="#fff"><path d="M6 2.500h9.500v7h-11V5M8.500 10v3M5 13.500h8M.5.5h4v4h-4zM2.500 4.500v9"/></svg>
    <span>ENG</span>
    <div class="clock ms-2">8:52 PM<br>4/11/2023</div>
    <button class="notif" aria-label="Notifications"><svg width="26" height="26" viewBox="0 0 26 26"><path d="M1 2h16v13H9l-3 3v-3H1z" fill="#fff"/><path d="M3 5.500h12M3 8.500h12M3 11.500h7" stroke="#202020"/><circle cx="16" cy="17" r="8" fill="#333" stroke="#aaa"/><text x="16" y="21" font-size="11" font-weight="700" fill="#fff" text-anchor="middle">2</text></svg></button>
  </div>
</footer>

<script src="https://cdn.jsdelivr.net/npm/bootstrap@5.3.0/dist/js/bootstrap.bundle.min.js"></script>
</body>
</html>
